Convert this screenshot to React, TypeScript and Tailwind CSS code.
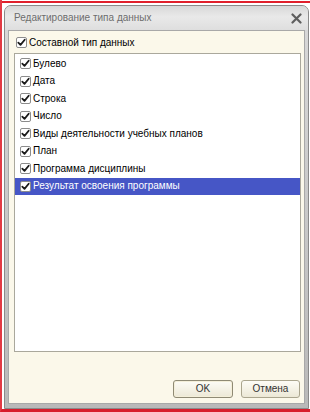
import React from "react";

const Check = () => (
  <span className="flex items-center justify-center w-[11px] h-[11px] bg-white border border-[#8c8c8c] rounded-[2px] shrink-0">
    <svg width="9" height="9" viewBox="0 0 9 9">
      <path d="M1.3 4.6 L3.5 6.9 L7.7 1.8" fill="none" stroke="#1a1a1a" strokeWidth="1.8" strokeLinecap="round" strokeLinejoin="round" />
    </svg>
  </span>
);

const items = [
  "Булево",
  "Дата",
  "Строка",
  "Число",
  "Виды деятельности учебных планов",
  "План",
  "Программа дисциплины",
  "Результат освоения программы",
];

export default function App() {
  return (
    <div
      className="w-[310px] h-[412px] bg-white border-l-2 border-l-[#e23a44] border-b-[3px] border-b-[#d81c2c] pt-[1px] overflow-hidden flex flex-col"
      style={{ fontFamily: '"Liberation Sans", Arial, sans-serif' }}
    >
      <div className="h-[2px] bg-[#e0202c] shrink-0" />
      <div className="flex-1 mt-[2px] ml-[2px] mr-[1px] flex flex-col rounded-t-[7px] border border-[#8a8a8a] bg-[linear-gradient(180deg,#d9d9d9_0%,#b9b9b9_100%)] px-[3px] pb-[4px]">
        <div className="h-[24px] shrink-0 flex items-center justify-between pl-[9px] pr-[6px] bg-[linear-gradient(180deg,#d8d8d8_0%,#e9e9e9_45%,#dedede_100%)] -mx-[3px] rounded-t-[6px]">
          <span className="text-[10px] text-[#6d6d6d] leading-none">Редактирование типа данных</span>
          <svg width="11" height="11" viewBox="0 0 11 11">
            <path d="M1.5 1.5 L9.5 9.5 M9.5 1.5 L1.5 9.5" stroke="#5e5e5e" strokeWidth="2.2" strokeLinecap="round" />
          </svg>
        </div>
        <div className="flex-1 flex flex-col bg-[#fbf8ea] border border-[#a8a8a8] pl-[5px] pr-[3px] pt-[6px] pb-[5px]">
          <div className="flex items-center gap-[2px] pl-[2px] h-[11px]">
            <Check />
            <span className="text-[10px] text-black leading-none">Составной тип данных</span>
          </div>
          <div className="mt-[5px] h-[299px] bg-white border border-[#aaa89c] flex flex-col pt-[1px]">
            {items.map((t, i) => {
              const sel = i === items.length - 1;
              return (
                <div
                  key={t}
                  className={
                    "h-[17.5px] flex items-center gap-[2px] pl-[5px] " +
                    (sel ? "bg-[#4656c6] text-white" : "text-black")
                  }
                >
                  <Check />
                  <span className="text-[10px] leading-none">{t}</span>
                </div>
              );
            })}
          </div>
          <div className="flex-1 flex items-end justify-end gap-[8px] pr-[1px]">
            <button className="w-[60px] h-[18px] rounded-[3px] border border-[#8f8a74] bg-[linear-gradient(180deg,#fdfcf6_0%,#ece8d6_100%)] text-[10px] text-[#333] leading-none shadow-[inset_0_0_0_1px_#f4efd9]">
              OK
            </button>
            <button className="w-[59px] h-[18px] rounded-[3px] border border-[#aaa58e] bg-[linear-gradient(180deg,#fdfcf6_0%,#ece8d6_100%)] text-[10px] text-[#333] leading-none">
              Отмена
            </button>
          </div>
        </div>
      </div>
    </div>
  );
}
